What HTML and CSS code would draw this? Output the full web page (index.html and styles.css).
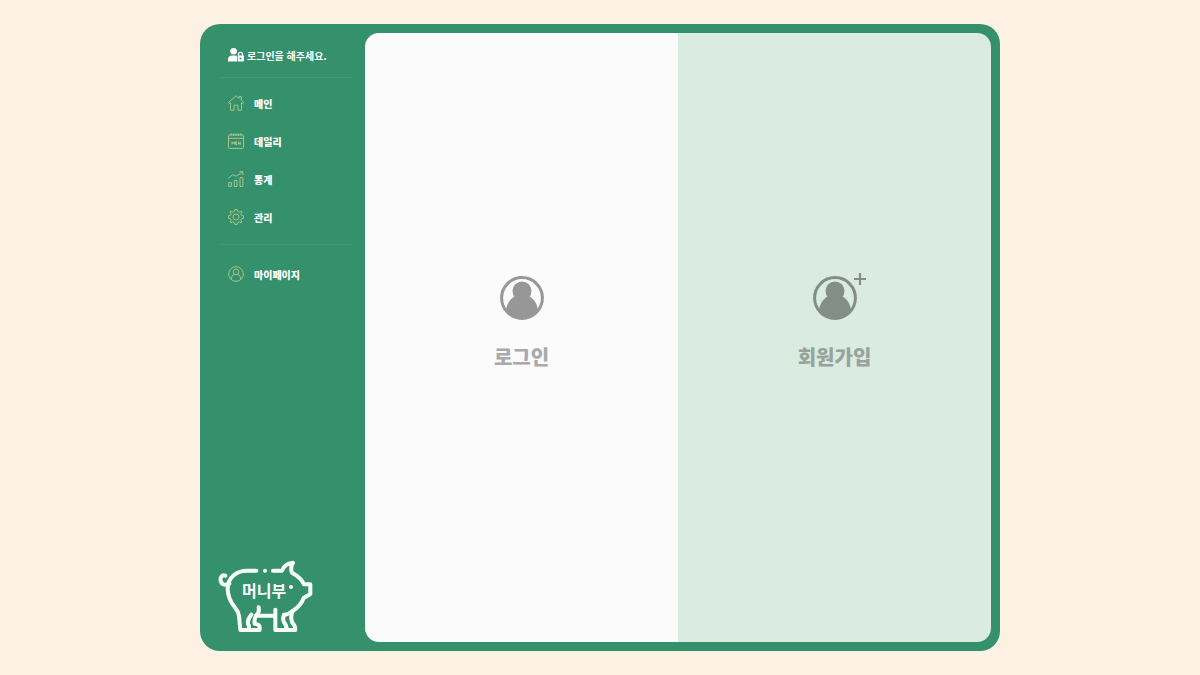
FILE: index.html
```html
<!DOCTYPE html>
<html lang="ko">
<head>
<meta charset="utf-8">
<meta name="viewport" content="width=device-width, initial-scale=1">
<title>머니부</title>
<link rel="stylesheet" href="styles.css">
</head>
<body>
<div class="shell">
  <aside class="sidebar">
    <p class="status">
      <svg class="status-icon" viewBox="0 0 16 14" aria-hidden="true">
        <circle cx="5.6" cy="3.3" r="3.3" fill="currentColor"/>
        <path d="M0 13.4V11.5C0 9 1.5 7.4 4 7.4H7.2C8 7.4 8.6 7.6 9 8V13.4Z" fill="currentColor"/>
        <path d="M10.5 8V6.3a2 2 0 0 1 4 0V8" fill="none" stroke="currentColor" stroke-width="1.3"/>
        <path fill-rule="evenodd" d="M9.7 7.5H15.3Q16 7.5 16 8.2V12.7Q16 13.4 15.3 13.4H9.7ZM12.5 9.5a1 1 0 1 0 0 2a1 1 0 1 0 0-2Z" fill="currentColor"/>
      </svg>
      <span>로그인을 해주세요.</span>
    </p>
    <nav class="nav">
      <ul class="menu">
        <li><a class="menu-link" href="#main">
          <svg class="menu-icon" viewBox="0 0 16 16" aria-hidden="true"><path d="M2.5 7.8V15.3H6V10.2H10V15.3H13.5V7.8M2.5 7.8L1.2 8.6L.6 7.4L8 .8L11 3.3V1.7H13.3V5.4L15.4 7.4L14.7 8.6L13.5 7.8"/></svg>
          메인</a></li>
        <li><a class="menu-link" href="#daily">
          <svg class="menu-icon" viewBox="0 0 16 16" aria-hidden="true"><rect x=".5" y="1.8" width="15" height="13.6" rx="1"/><path d="M.5 5.3H15.500M3 .3V3M5.500 .3V3M8 .3V3M10.500 .3V3M13 .3V3M4 11.500V8.800L5.200 10.500L6.400 8.800V11.500M9.200 8.800H7.700V11.500H9.200M7.700 10.100H9M10.500 11.500V8.800L12.300 11.500V8.800"/></svg>
          데일리</a></li>
        <li><a class="menu-link" href="#stats">
          <svg class="menu-icon" viewBox="0 0 16 16" aria-hidden="true"><path d="M.7 15.4V11.6H3.4V15.4ZM6.2 15.4V9.5H9V15.4ZM12 15.4V6.6H14.9V15.4ZM.5 7.2L4.8 3.5L8 5.3L14.6 .9M11.4 .7H14.9V4"/></svg>
          통계</a></li>
        <li><a class="menu-link" href="#manage">
          <svg class="menu-icon" viewBox="0 0 16 16" aria-hidden="true"><path d="M6.7 .6H9.3L9.8 2.6L11.2 3.2L13 2.1L14 3.1L12.8 4.8L13.4 6.2L15.4 6.7V9.3L13.4 9.8L12.8 11.2L13.9 13L13 13.9L11.2 12.8L9.8 13.4L9.3 15.4H6.7L6.2 13.4L4.8 12.8L3 13.9L2.1 13L3.2 11.2L2.6 9.8L.6 9.3V6.7L2.6 6.2L3.2 4.8L2.1 3L3 2.1L4.8 3.2L6.2 2.6Z"/><circle cx="8" cy="8" r="3"/></svg>
          관리</a></li>
      </ul>
      <ul class="menu">
        <li><a class="menu-link" href="#mypage">
          <svg class="menu-icon" viewBox="0 0 16 16" aria-hidden="true"><circle cx="8" cy="8" r="7.3"/><circle cx="8" cy="5.9" r="2.8"/><path d="M3.2 13.3C3.2 10.7 4.5 8.9 6.4 8.3M12.8 13.3C12.8 10.7 11.5 8.9 9.6 8.3"/></svg>
          마이페이지</a></li>
      </ul>
    </nav>
    <a class="brand" href="#main">
      <svg class="pig" viewBox="24 30 288 219" aria-hidden="true">
        <g fill="none" stroke="currentColor" stroke-width="12" stroke-linecap="round" stroke-linejoin="round">
          <path d="M46 77C36 73 30 82 32 92C35 106 47 107 58 101"/>
          <path d="M139 62H112C77 62 53 84 53 116C53 140 62 157 76 174Q86 186 87 198L91 240H149V232C149 225 142 222 134 221Q132 208 138 197C145 192 148 183 146 172"/>
          <path d="M117 238V228C110 218 114 206 124 194M138 197H193"/>
          <path d="M189 62H216Q223 41 249 38Q240 53 246 68C264 78 276 88 282 103H301V132L281 144C274 163 262 174 248 183C242 196 243 208 247 218Q256 226 256 240H196V179"/>
          <path d="M248 183Q235 194 222 194Q217 207 222 217Q230 226 230 238"/>
        </g>
        <circle cx="165" cy="62" r="6" fill="currentColor"/>
        <circle cx="243" cy="111" r="6" fill="currentColor"/>
      </svg>
      <span class="brand-name">머니부</span>
    </a>
  </aside>
  <main class="choices">
    <a class="choice choice-login" href="#login">
      <svg class="avatar" viewBox="0 0 44 44" aria-hidden="true"><circle cx="22" cy="22" r="20.4" fill="none" stroke="currentColor" stroke-width="3"/><circle cx="22" cy="15" r="9.5" fill="currentColor"/><path d="M6 35C6.500 28 10 23 15 20H29C34 23 37.500 28 38 35C30 46 14 46 6 35Z" fill="currentColor"/></svg>
      <span class="choice-name">로그인</span>
    </a>
    <a class="choice choice-join" href="#join">
      <svg class="avatar" viewBox="0 0 44 44" aria-hidden="true"><circle cx="22" cy="22" r="20.4" fill="none" stroke="currentColor" stroke-width="3"/><circle cx="22" cy="15" r="9.5" fill="currentColor"/><path d="M6 35C6.500 28 10 23 15 20H29C34 23 37.500 28 38 35C30 46 14 46 6 35Z" fill="currentColor"/><path d="M47 -3V9M41 3H53" fill="none" stroke="currentColor" stroke-width="2.200"/></svg>
      <span class="choice-name">회원가입</span>
    </a>
  </main>
</div>
</body>
</html>
```
FILE: styles.css
```css
* {
  box-sizing: border-box;
}

body {
  margin: 0;
  min-height: 100vh;
  padding: 24px;
  display: flex;
  justify-content: center;
  background: #fdf1e3;
  font-family: "Noto Sans CJK KR", sans-serif;
}

a {
  color: inherit;
  text-decoration: none;
}

.shell {
  width: 100%;
  max-width: 800px;
  padding: 9px;
  display: flex;
  border-radius: 20px;
  background: #35906c;
}

.sidebar {
  flex: 0 0 156px;
  padding: 12px 13px 9px 11px;
  display: flex;
  flex-direction: column;
  color: #fff;
}

.status {
  margin: 0;
  height: 33px;
  padding: 0 0 12px 8px;
  display: flex;
  align-items: center;
  gap: 3px;
  border-bottom: 1px solid #3f9877;
  font-size: 10px;
  font-weight: 700;
  white-space: nowrap;
}

.status-icon {
  width: 16px;
  height: 14px;
}

.menu {
  margin: 0;
  padding: 6px 0 8px;
  list-style: none;
}

.menu + .menu {
  padding-top: 10px;
  border-top: 1px solid #3f9877;
}

.menu-link {
  height: 38px;
  padding-left: 8px;
  display: flex;
  align-items: center;
  gap: 10px;
  font-size: 10px;
  font-weight: 900;
}

.menu-icon {
  width: 16px;
  height: 16px;
  fill: none;
  stroke: #a5c58b;
  stroke-width: 1;
}

.brand {
  width: 96px;
  margin-top: auto;
  margin-left: -2px;
  position: relative;
}

.pig {
  width: 100%;
  display: block;
  color: #f8fffb;
}

.brand-name {
  position: absolute;
  top: 20px;
  left: 24px;
  font-size: 16px;
  line-height: 20px;
  font-weight: 700;
}

.choices {
  flex: 1;
  display: grid;
  grid-template-columns: 1fr 1fr;
  border-radius: 14px;
  overflow: hidden;
}

.choice {
  padding-bottom: 28px;
  display: flex;
  flex-direction: column;
  align-items: center;
  justify-content: center;
  gap: 23px;
}

.choice-login {
  background: #fbfbfb;
  color: #979797;
}

.choice-join {
  background: #daebe2;
  color: #838e88;
}

.avatar {
  width: 44px;
  height: 44px;
  overflow: visible;
}

.choice-name {
  font-size: 20px;
  line-height: 28px;
  font-weight: 900;
}

.choice-login .choice-name {
  color: #a9a9a9;
}

.choice-join .choice-name {
  color: #98a39d;
}
```
